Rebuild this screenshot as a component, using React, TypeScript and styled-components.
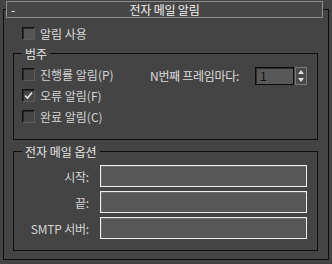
import styled, { createGlobalStyle } from "styled-components";

const GlobalStyle = createGlobalStyle`
  html, body {
    margin: 0;
    padding: 0;
    background: #444444;
  }
  * {
    box-sizing: border-box;
  }
`;

const Screen = styled.div`
  width: 332px;
  height: 264px;
  background: #444444;
  font-family: "Noto Sans CJK KR", "Noto Sans", sans-serif;
  font-size: 12px;
  color: #dcdcdc;
  overflow: hidden;
  padding-top: 9px;
`;

const Rollout = styled.div`
  display: flex;
  flex-direction: column;
  width: 326px;
  height: 251px;
  margin-left: 3px;
  border: 1px solid #0e0e0e;
  padding: 0 10px 0 9px;
`;

const TitleBar = styled.div`
  display: grid;
  grid-template-columns: 1fr auto 1fr;
  align-items: center;
  width: 317px;
  height: 17px;
  margin: -9px 0 0 -7px;
  padding: 0 4px;
  border: 1px solid #8c8c8c;
  background: #474747;
  color: #f2f2f2;
  line-height: 15px;
`;

const Collapse = styled.span`
  font-size: 12px;
`;

const Title = styled.span`
  letter-spacing: -0.2px;
`;

const Row = styled.label`
  display: flex;
  align-items: center;
  gap: 5px;
  height: 13px;
  line-height: 13px;
  white-space: nowrap;
`;

const EnableRow = styled(Row)`
  margin: 9px 0 0 9px;
`;

const Box = styled.span<{ $light?: boolean }>`
  display: flex;
  align-items: center;
  justify-content: center;
  width: 13px;
  height: 13px;
  flex: none;
  border: 1px solid #111111;
  border-right-color: #5c5c5c;
  border-bottom-color: #5c5c5c;
  background: ${({ $light }) => ($light ? "#555555" : "#474747")};
  box-shadow: inset 1px 1px 0 #2a2a2a;
`;

const Group = styled.div<{ $gap: number }>`
  display: flex;
  flex-direction: column;
  margin-top: ${({ $gap }) => $gap}px;
  border: 1px solid #0e0e0e;
  padding: 0 0 0 8px;
`;

const Legend = styled.span`
  align-self: flex-start;
  height: 17px;
  line-height: 17px;
  margin: -9px 0 0 0;
  padding: 0 3px;
  background: #444444;
  color: #e4e4e4;
`;

const CategoryBody = styled.div`
  display: flex;
  margin: 6px 0 16px 0;
`;

const CheckColumn = styled.div`
  display: flex;
  flex-direction: column;
  gap: 8px;
  width: 128px;
`;

const Muted = styled.span`
  color: #d4d4d4;
`;

const EveryN = styled.div`
  display: flex;
  align-items: center;
  height: 18px;
  margin-top: -1px;
`;

const EveryLabel = styled.span`
  width: 105px;
  white-space: nowrap;
  line-height: 18px;
  letter-spacing: -0.3px;
`;

const NumberBox = styled.div`
  width: 39px;
  height: 18px;
  border: 1px solid #0c0c0c;
  background: #585858;
  box-shadow: inset 1px 1px 0 #2c2c2c;
  color: #101010;
  line-height: 16px;
  padding-left: 4px;
`;

const Spinner = styled.div`
  display: flex;
  flex-direction: column;
  width: 12px;
  height: 18px;
  margin-left: 1px;
  border: 1px solid #7a7a7a;
  background: #4a4a4a;
`;

const SpinHalf = styled.div`
  flex: 1;
  display: flex;
  align-items: center;
  justify-content: center;
`;

const OptionsBody = styled.div`
  display: flex;
  flex-direction: column;
  gap: 4px;
  margin: 5px 0 11px 0;
`;

const FieldRow = styled.div`
  display: flex;
  align-items: center;
  gap: 11px;
`;

const FieldLabel = styled.span`
  width: 67px;
  text-align: right;
  white-space: nowrap;
  color: #d4d4d4;
  letter-spacing: -0.2px;
`;

const Field = styled.div`
  width: 207px;
  height: 22px;
  border: 1px solid #ededed;
  background: #575757;
  box-shadow: inset 1px 1px 0 #6c6c6c;
`;

function Check({ checked, light }: { checked?: boolean; light?: boolean }) {
  return (
    <Box $light={light}>
      {checked && (
        <svg width="9" height="9" viewBox="0 0 9 9">
          <polyline
            points="1,4.5 3.5,7 8,1.5"
            fill="none"
            stroke="#e6e6e6"
            strokeWidth="1.6"
          />
        </svg>
      )}
    </Box>
  );
}

function Triangle({ up }: { up?: boolean }) {
  return (
    <svg width="6" height="4" viewBox="0 0 6 4">
      <polygon points={up ? "0,4 6,4 3,0" : "0,0 6,0 3,4"} fill="#e0e0e0" />
    </svg>
  );
}

export default function App() {
  return (
    <Screen>
      <GlobalStyle />
      <Rollout>
        <TitleBar>
          <Collapse>-</Collapse>
          <Title>전자 메일 알림</Title>
          <span />
        </TitleBar>

        <EnableRow>
          <Check light />
          <span>알림 사용</span>
        </EnableRow>

        <Group $gap={13}>
          <Legend>범주</Legend>
          <CategoryBody>
            <CheckColumn>
              <Row>
                <Check />
                <Muted>진행률 알림(P)</Muted>
              </Row>
              <Row>
                <Check checked />
                <Muted>오류 알림(F)</Muted>
              </Row>
              <Row>
                <Check />
                <Muted>완료 알림(C)</Muted>
              </Row>
            </CheckColumn>
            <EveryN>
              <EveryLabel>N번째 프레임마다:</EveryLabel>
              <NumberBox>1</NumberBox>
              <Spinner>
                <SpinHalf>
                  <Triangle up />
                </SpinHalf>
                <SpinHalf>
                  <Triangle />
                </SpinHalf>
              </Spinner>
            </EveryN>
          </CategoryBody>
        </Group>

        <Group $gap={11}>
          <Legend>전자 메일 옵션</Legend>
          <OptionsBody>
            <FieldRow>
              <FieldLabel>시작:</FieldLabel>
              <Field />
            </FieldRow>
            <FieldRow>
              <FieldLabel>끝:</FieldLabel>
              <Field />
            </FieldRow>
            <FieldRow>
              <FieldLabel>SMTP 서버:</FieldLabel>
              <Field />
            </FieldRow>
          </OptionsBody>
        </Group>
      </Rollout>
    </Screen>
  );
}
